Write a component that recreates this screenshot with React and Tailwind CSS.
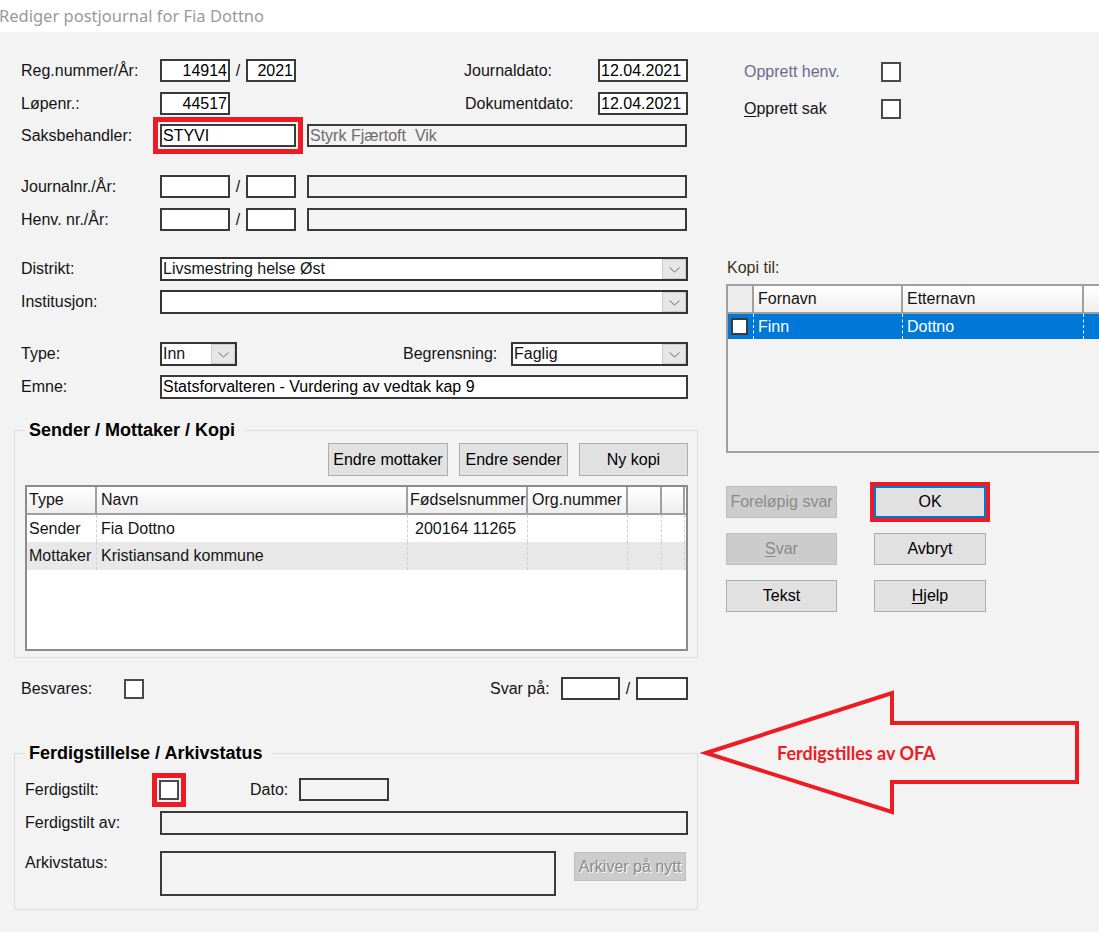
import React from 'react';

const BODY = "font-['Liberation_Sans',Arial,sans-serif]";

function Field({ w, h = 'h-[23px]', value, right, gray, className = '' }) {
  return (
    <div
      className={`${w} ${h} shrink-0 flex items-center border-2 border-[#3a3a3a] overflow-hidden whitespace-pre ${
        gray ? 'bg-[#f3f3f3] text-[#6d6d6d]' : 'bg-white text-black'
      } ${right ? 'justify-end pr-[1px]' : 'pl-[1px]'} ${className}`}
    >
      {value}
    </div>
  );
}

function Combo({ w, value, btn = 'w-[24px]' }) {
  return (
    <div className={`${w} h-[24px] shrink-0 flex items-center border-2 border-[#333] bg-white`}>
      <span className="flex-1 pl-[1px] whitespace-nowrap overflow-hidden">{value}</span>
      <div className={`${btn} h-[20px] flex items-end justify-center pb-[5px] bg-[#e6e6e6] border border-[#cdcdcd]`}>
        <svg width="11" height="6" viewBox="0 0 11 6">
          <polyline points="0.5,0.5 5.5,5 10.5,0.5" fill="none" stroke="#6a6a6a" strokeWidth="1" />
        </svg>
      </div>
    </div>
  );
}

function Check({ className = '' }) {
  return <div className={`w-[20px] h-[20px] shrink-0 bg-white border-2 border-[#4a4a4a] ${className}`} />;
}

function Btn({ w, h = 'h-[32px]', children, disabled, className = '' }) {
  return (
    <button
      type="button"
      className={`${w} ${h} shrink-0 flex items-center justify-center whitespace-nowrap border ${
        disabled ? 'bg-[#cccccc] border-[#bfbfbf] text-[#8a8a8a]' : 'bg-[#e1e1e1] border-[#adadad] text-black'
      } ${className}`}
    >
      {children}
    </button>
  );
}

function Label({ w = 'w-[139px]', children, className = '' }) {
  return <div className={`${w} shrink-0 whitespace-nowrap ${className}`}>{children}</div>;
}

const Slash = () => <div className="w-[16px] shrink-0 text-center">/</div>;

const headCell = 'h-[26px] flex items-center border-r-2 border-[#a0a0a0] bg-linear-to-b from-white to-[#eeeeee] whitespace-nowrap overflow-hidden';
const rowCell = 'flex items-center border-r border-dashed border-[#d2d2d2] whitespace-nowrap overflow-hidden';

export default function App() {
  return (
    <div className={`relative w-[1099px] h-[932px] overflow-hidden bg-[#f3f3f3] ${BODY} text-[16px] leading-[18px] text-[#141414]`}>
      {/* Title bar */}
      <div className="h-[32px] bg-white flex items-center">
        <span className="-ml-[1px] font-['Noto_Sans',sans-serif] text-[16.5px] text-[#9a9a9a]">Rediger postjournal for Fia Dottno</span>
      </div>

      <div className="flex">
        {/* Left column */}
        <div className="w-[698px] shrink-0">
          <div className="mt-[27px] h-[23px] flex items-center pl-[21px]">
            <Label>Reg.nummer/År:</Label>
            <Field w="w-[70px]" value="14914" right />
            <Slash />
            <Field w="w-[50px]" value="2021" right />
            <Label w="w-[134px]" className="ml-[168px]">Journaldato:</Label>
            <Field w="w-[90px]" value="12.04.2021" />
          </div>
          <div className="mt-[10px] h-[23px] flex items-center pl-[21px]">
            <Label>Løpenr.:</Label>
            <Field w="w-[70px]" value="44517" right />
            <Label w="w-[133px]" className="ml-[235px]">Dokumentdato:</Label>
            <Field w="w-[90px]" value="12.04.2021" />
          </div>
          <div className="mt-[9px] h-[23px] flex items-center pl-[21px]">
            <Label>Saksbehandler:</Label>
            <Field
              w="w-[136px]"
              value="STYVI"
              className="outline-solid outline-[5px] outline-[#ed1c24] outline-offset-[2px]"
            />
            <Field w="w-[380px]" value="Styrk Fjærtoft  Vik" gray className="ml-[11px]" />
          </div>
          <div className="mt-[28px] h-[23px] flex items-center pl-[21px]">
            <Label>Journalnr./År:</Label>
            <Field w="w-[70px]" />
            <Slash />
            <Field w="w-[50px]" />
            <Field w="w-[380px]" gray className="ml-[11px]" />
          </div>
          <div className="mt-[10px] h-[23px] flex items-center pl-[21px]">
            <Label>Henv. nr./År:</Label>
            <Field w="w-[70px]" />
            <Slash />
            <Field w="w-[50px]" />
            <Field w="w-[380px]" gray className="ml-[11px]" />
          </div>
          <div className="mt-[26px] h-[24px] flex items-center pl-[21px]">
            <Label>Distrikt:</Label>
            <Combo w="w-[528px]" value="Livsmestring helse Øst" />
          </div>
          <div className="mt-[9px] h-[24px] flex items-center pl-[21px]">
            <Label>Institusjon:</Label>
            <Combo w="w-[528px]" value="" />
          </div>
          <div className="mt-[28px] h-[24px] flex items-center pl-[21px]">
            <Label>Type:</Label>
            <Combo w="w-[77px]" value="Inn" />
            <Label w="w-[108px]" className="ml-[166px]">Begrensning:</Label>
            <Combo w="w-[177px]" value="Faglig" />
          </div>
          <div className="mt-[9px] h-[24px] flex items-center pl-[21px]">
            <Label>Emne:</Label>
            <Field w="w-[528px]" h="h-[24px]" value="Statsforvalteren - Vurdering av vedtak kap 9" />
          </div>

          {/* Sender / Mottaker / Kopi */}
          <fieldset className="mt-[21px] ml-[14px] w-[684px] border border-[#dcdcdc] pb-[6px]">
            <legend className="ml-[10px] pl-[4px] pr-[10px] font-['Liberation_Sans',sans-serif] font-bold text-[18px] leading-[20px] text-black">
              Sender / Mottaker / Kopi
            </legend>
            <div className="pt-[3px] pr-[9px] flex justify-end gap-[11px]">
              <Btn w="w-[120px]" h="h-[33px]">Endre mottaker</Btn>
              <Btn w="w-[109px]" h="h-[33px]">Endre sender</Btn>
              <Btn w="w-[109px]" h="h-[33px]">Ny kopi</Btn>
            </div>
            <div className="mt-[9px] ml-[10px] w-[663px] h-[166px] border-2 border-[#8c8c8c] bg-white">
              <div className="grid grid-cols-[70px_311px_120px_100px_34px_23px] border-b-2 border-[#a0a0a0]">
                <div className={`${headCell} pl-[2px]`}>Type</div>
                <div className={`${headCell} pl-[4px]`}>Navn</div>
                <div className={`${headCell} pl-[2px]`}>Fødselsnummer</div>
                <div className={`${headCell} pl-[4px]`}>Org.nummer</div>
                <div className={headCell} />
                <div className={headCell} />
              </div>
              <div className="grid grid-cols-[70px_311px_120px_100px_34px_23px] h-[27px] bg-white">
                <div className={`${rowCell} pl-[2px]`}>Sender</div>
                <div className={`${rowCell} pl-[4px]`}>Fia Dottno</div>
                <div className={`${rowCell} pl-[7px]`}>200164 11265</div>
                <div className={rowCell} />
                <div className={rowCell} />
                <div className={rowCell} />
              </div>
              <div className="grid grid-cols-[70px_311px_120px_100px_34px_23px] h-[28px] bg-[#e8e8e8]">
                <div className={`${rowCell} pl-[2px]`}>Mottaker</div>
                <div className={`${rowCell} pl-[4px]`}>Kristiansand kommune</div>
                <div className={rowCell} />
                <div className={rowCell} />
                <div className={rowCell} />
                <div className={rowCell} />
              </div>
            </div>
          </fieldset>

          <div className="mt-[19px] h-[23px] flex items-center pl-[21px]">
            <Label w="w-[103px]">Besvares:</Label>
            <Check />
            <Label w="w-[71px]" className="ml-[346px]">Svar på:</Label>
            <Field w="w-[59px]" />
            <Slash />
            <Field w="w-[52px]" />
          </div>

          {/* Ferdigstillelse / Arkivstatus */}
          <fieldset className="mt-[43px] ml-[14px] w-[684px] border border-[#dcdcdc] pb-[13px]">
            <legend className="ml-[10px] pl-[4px] pr-[10px] font-['Liberation_Sans',sans-serif] font-bold text-[18px] leading-[20px] text-black">
              Ferdigstillelse / Arkivstatus
            </legend>
            <div className="mt-[15px] h-[23px] flex items-center pl-[10px]">
              <Label w="w-[134px]">Ferdigstilt:</Label>
              <Check className="outline-solid outline-[5px] outline-[#ed1c24] outline-offset-[2px]" />
              <Label w="w-[49px]" className="ml-[71px]">Dato:</Label>
              <Field w="w-[90px]" gray />
            </div>
            <div className="mt-[10px] h-[24px] flex items-center pl-[10px]">
              <Label w="w-[135px]">Ferdigstilt av:</Label>
              <Field w="w-[528px]" h="h-[24px]" gray />
            </div>
            <div className="mt-[16px] flex items-start pl-[10px]">
              <Label w="w-[135px]" className="pt-[3px]">Arkivstatus:</Label>
              <Field w="w-[396px]" h="h-[45px]" gray />
              <Btn w="w-[112px]" h="h-[29px]" disabled className="ml-[18px] mt-[1px] [text-shadow:1px_1px_0_#ffffff]">
                Arkiver på nytt
              </Btn>
            </div>
          </fieldset>
        </div>

        {/* Right column */}
        <div className="ml-[28px] flex-1 min-w-0">
          <div className="mt-[30px] h-[20px] flex items-center">
            <Label w="w-[155px]" className="pl-[18px] text-[#6b6b8c]">Opprett henv.</Label>
            <Check />
          </div>
          <div className="mt-[17px] h-[20px] flex items-center">
            <Label w="w-[155px]" className="pl-[18px]">
              <span className="underline underline-offset-[2px]">O</span>pprett sak
            </Label>
            <Check />
          </div>

          <div className="mt-[140px] h-[18px] pl-[1px] text-[#3a3020]">Kopi til:</div>
          <div className="mt-[7px] w-[380px] h-[169px] border-2 border-[#a0a0a0] bg-[#f3f3f3]">
            <div className="grid grid-cols-[26px_149px_181px_1fr] border-b-2 border-[#a0a0a0]">
              <div className={`${headCell} !bg-none bg-[#ececec]`} />
              <div className={`${headCell} pl-[4px]`}>Fornavn</div>
              <div className={`${headCell} pl-[4px]`}>Etternavn</div>
              <div className={headCell} />
            </div>
            <div className="grid grid-cols-[26px_149px_181px_1fr] h-[25px] bg-[#0078d7] text-white">
              <div className="flex items-center pl-[3px] border-r border-dashed border-white">
                <div className="w-[17px] h-[17px] bg-white border-2 border-[#3a3a3a]" />
              </div>
              <div className="flex items-center pl-[4px] border-r border-dashed border-white">Finn</div>
              <div className="flex items-center pl-[4px] border-r border-dashed border-white">Dottno</div>
              <div />
            </div>
          </div>

          <div className="mt-[33px] flex flex-col gap-[15px]">
            <div className="flex gap-[37px]">
              <Btn w="w-[111px]" disabled>Foreløpig svar</Btn>
              <Btn w="w-[112px]" className="border-2 !border-[#0078d7] outline-solid outline-[4px] outline-[#ed1c24]">OK</Btn>
            </div>
            <div className="flex gap-[37px]">
              <Btn w="w-[111px]" disabled>
                <span className="underline underline-offset-[2px]">S</span>var
              </Btn>
              <Btn w="w-[112px]">Avbryt</Btn>
            </div>
            <div className="flex gap-[37px]">
              <Btn w="w-[111px]">Tekst</Btn>
              <Btn w="w-[112px]">
                <span className="underline underline-offset-[2px]">H</span>jelp
              </Btn>
            </div>
          </div>
        </div>
      </div>

      {/* Annotation arrow */}
      <svg className="absolute left-0 top-0 pointer-events-none" width="1099" height="932">
        <polygon
          points="706,753 892,693 892,723 1077,723 1077,782 892,782 892,812"
          fill="none"
          stroke="#ed1c24"
          strokeWidth="4"
        />
      </svg>
      <span className="absolute left-[777px] top-[741px] font-['Lato',sans-serif] font-bold text-[18px] leading-[24px] text-[#ed1c24]">
        Ferdigstilles av OFA
      </span>
    </div>
  );
}
